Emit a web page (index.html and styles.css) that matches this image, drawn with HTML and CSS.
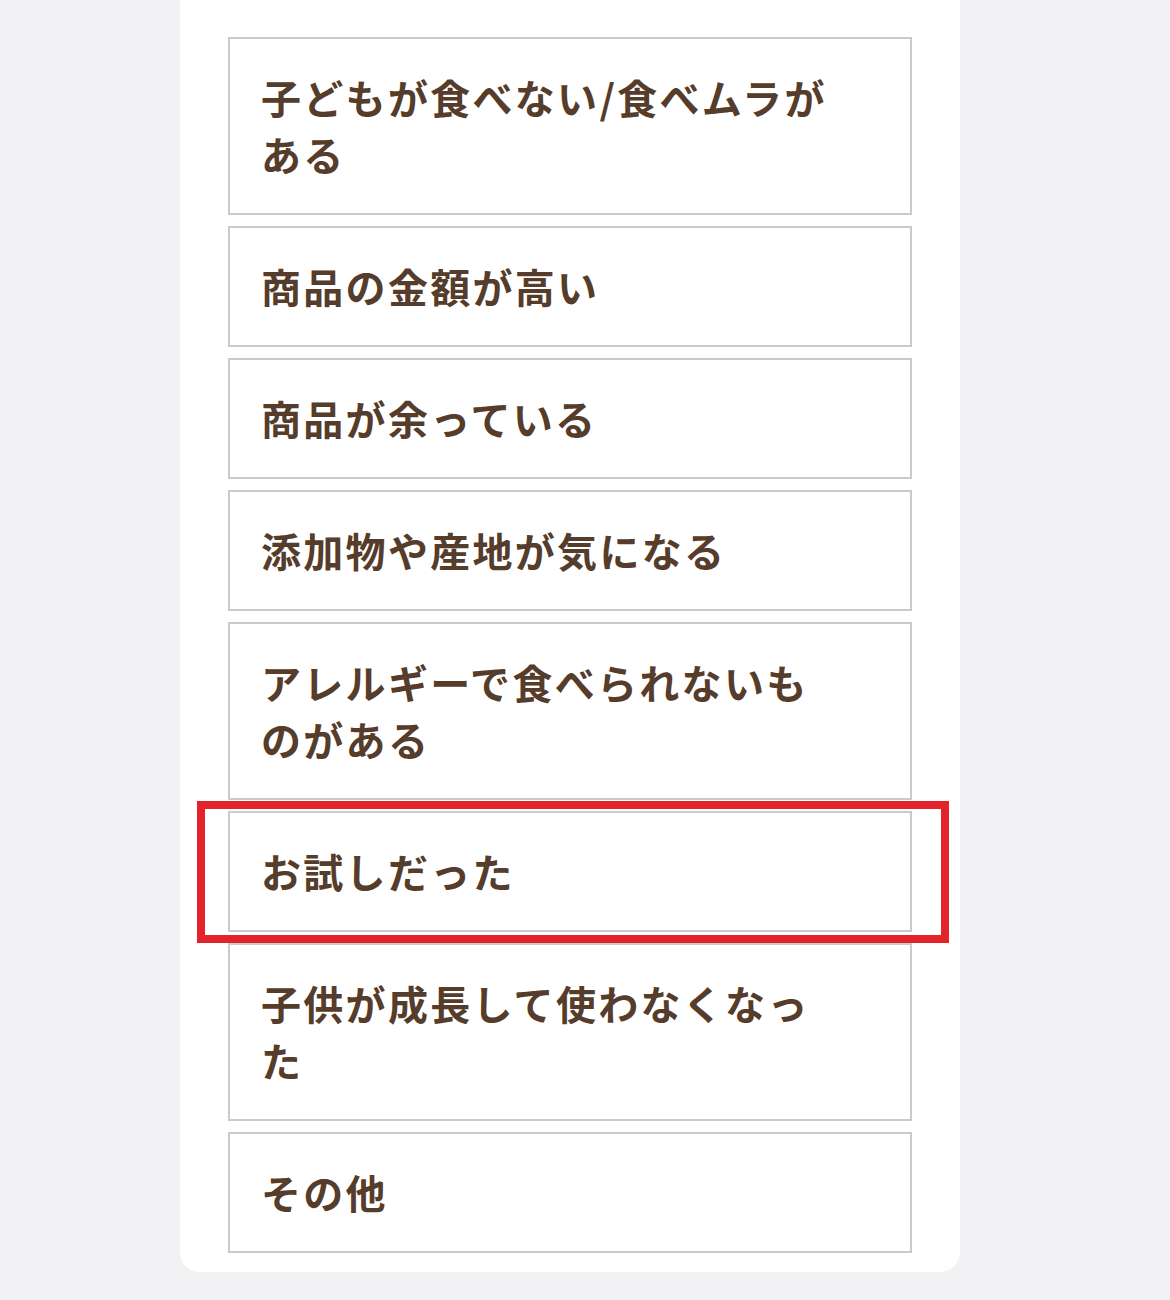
FILE: index.html
```html
<!DOCTYPE html>
<html lang="ja">
<head>
<meta charset="utf-8">
<title>理由の選択</title>
<link rel="stylesheet" href="styles.css">
</head>
<body>
<div class="page">
  <div class="card">
    <ul class="options">
      <li class="option">子どもが食べない/食べムラがある</li>
      <li class="option">商品の金額が高い</li>
      <li class="option">商品が余っている</li>
      <li class="option">添加物や産地が気になる</li>
      <li class="option">アレルギーで食べられないものがある</li>
      <li class="option option-marked">お試しだった<span class="highlight"></span></li>
      <li class="option">子供が成長して使わなくなった</li>
      <li class="option">その他</li>
    </ul>
  </div>
</div>
</body>
</html>
```

FILE: styles.css
```css
html, body {
  margin: 0;
  padding: 0;
  background: #f2f2f4;
}

.page {
  width: 1170px;
  height: 1300px;
  box-sizing: border-box;
  padding-left: 180px;
  display: flex;
  font-family: "Noto Sans CJK JP", "Noto Sans", sans-serif;
}

.card {
  width: 780px;
  height: 1272px;
  box-sizing: border-box;
  background: #ffffff;
  border-radius: 0 0 20px 20px;
  padding: 37px 48px 19px;
}

.options {
  list-style: none;
  margin: 0;
  padding: 0;
  display: flex;
  flex-direction: column;
  gap: 11px;
}

.option {
  position: relative;
  border: 2px solid #c9cacc;
  padding: 30px 66px 30px 31px;
  font-size: 40px;
  line-height: 57px;
  letter-spacing: 2.3px;
  font-weight: 700;
  color: #563c2a;
  background: #ffffff;
}

.highlight {
  position: absolute;
  left: -33px;
  right: -39px;
  top: -12px;
  bottom: -13px;
  border: 8px solid #e42229;
  pointer-events: none;
}
```
